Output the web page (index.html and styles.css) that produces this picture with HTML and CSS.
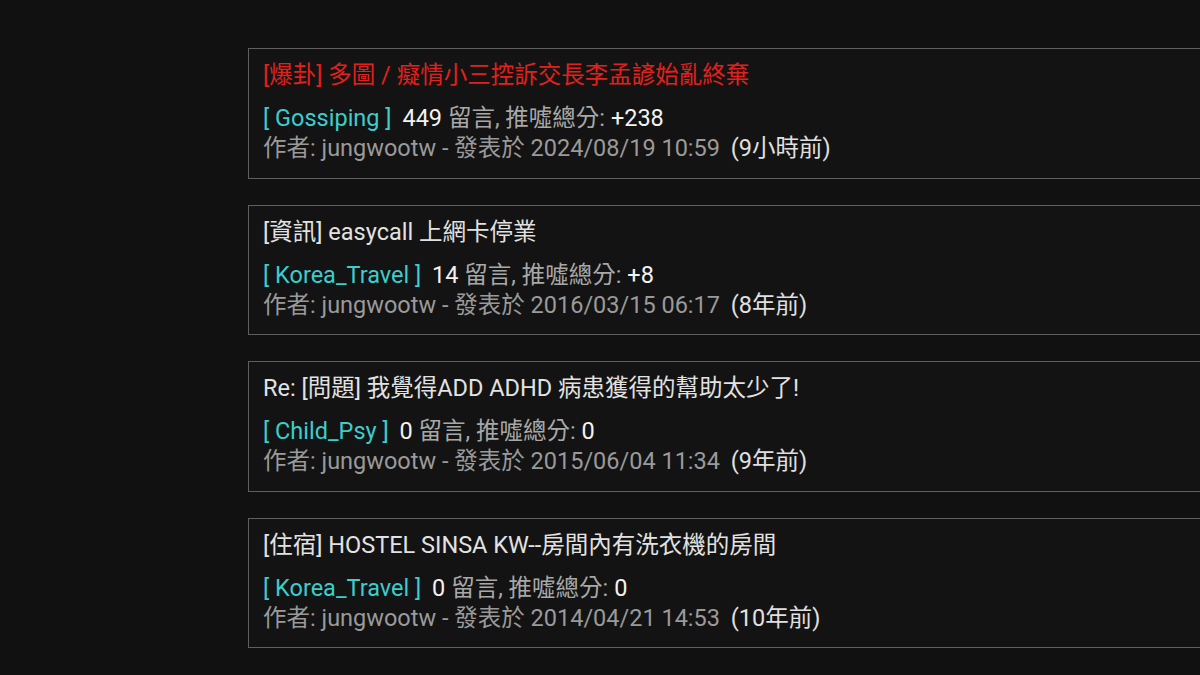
FILE: index.html
```html
<!DOCTYPE html>
<html lang="zh-Hant">
<head>
<meta charset="utf-8">
<link rel="stylesheet" href="styles.css">
</head>
<body>
<main class="list">
  <article class="card">
    <div class="title hot">[爆卦] 多圖 / 癡情小三控訴交長李孟諺始亂終棄</div>
    <div class="stats"><span class="board">[ Gossiping ]</span> <span class="num first">449</span> 留言, 推噓總分: <span class="num">+238</span></div>
    <div class="meta">作者: jungwootw - 發表於 2024/08/19 10:59 <span class="ago">(9小時前)</span></div>
  </article>
  <article class="card">
    <div class="title">[資訊] easycall 上網卡停業</div>
    <div class="stats"><span class="board">[ Korea_Travel ]</span> <span class="num first">14</span> 留言, 推噓總分: <span class="num">+8</span></div>
    <div class="meta">作者: jungwootw - 發表於 2016/03/15 06:17 <span class="ago">(8年前)</span></div>
  </article>
  <article class="card">
    <div class="title">Re: [問題] 我覺得ADD ADHD 病患獲得的幫助太少了!</div>
    <div class="stats"><span class="board">[ Child_Psy ]</span> <span class="num first">0</span> 留言, 推噓總分: <span class="num">0</span></div>
    <div class="meta">作者: jungwootw - 發表於 2015/06/04 11:34 <span class="ago">(9年前)</span></div>
  </article>
  <article class="card">
    <div class="title">[住宿] HOSTEL SINSA KW--房間內有洗衣機的房間</div>
    <div class="stats"><span class="board">[ Korea_Travel ]</span> <span class="num first">0</span> 留言, 推噓總分: <span class="num">0</span></div>
    <div class="meta">作者: jungwootw - 發表於 2014/04/21 14:53 <span class="ago">(10年前)</span></div>
  </article>
</main>
</body>
</html>
```
FILE: styles.css
```css
html, body {
  margin: 0;
  padding: 0;
  background: #111111;
  overflow: hidden;
}
body {
  width: 1200px;
  height: 675px;
  font-family: Roboto, "Noto Sans CJK TC", sans-serif;
  font-size: 23.5px;
  color: #a8a8a8;
}
.list {
  display: flex;
  flex-direction: column;
  gap: 26px;
  padding: 48px 0 0 248px;
}
.card {
  width: 1000px;
  height: 130.5px;
  box-sizing: border-box;
  border: 1px solid #5f5f5f;
  background: #131313;
  padding: 12px 14px 0 14px;
}
.title {
  color: #e2e2e2;
  line-height: 28px;
  height: 28px;
  white-space: nowrap;
}
.title.hot {
  color: #e0211d;
}
.stats {
  margin-top: 14px;
  line-height: 30px;
  white-space: nowrap;
}
.meta {
  line-height: 31px;
  white-space: nowrap;
  color: #9a9a9a;
}
.board {
  color: #3ccdcd;
}
.num {
  color: #f2f2f2;
}
.num.first {
  margin-left: 5px;
}
.ago {
  color: #e0e0e0;
  margin-left: 5px;
}
```
